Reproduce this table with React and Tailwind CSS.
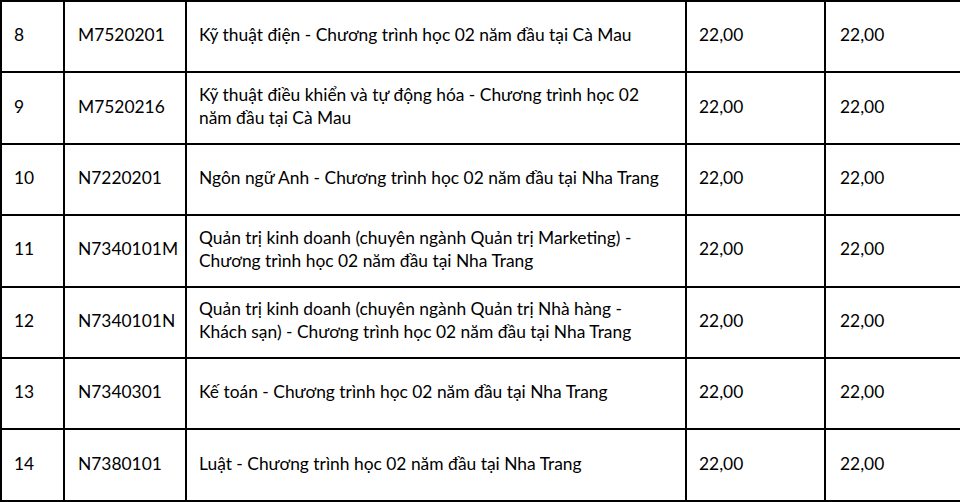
const rows = [
  { stt: "8", code: "M7520201", name: ["Kỹ thuật điện - Chương trình học 02 năm đầu tại Cà Mau"] },
  { stt: "9", code: "M7520216", name: ["Kỹ thuật điều khiển và tự động hóa - Chương trình học 02", "năm đầu tại Cà Mau"] },
  { stt: "10", code: "N7220201", name: ["Ngôn ngữ Anh - Chương trình học 02 năm đầu tại Nha Trang"] },
  { stt: "11", code: "N7340101M", name: ["Quản trị kinh doanh (chuyên ngành Quản trị Marketing) -", "Chương trình học 02 năm đầu tại Nha Trang"] },
  { stt: "12", code: "N7340101N", name: ["Quản trị kinh doanh (chuyên ngành Quản trị Nhà hàng -", "Khách sạn) - Chương trình học 02 năm đầu tại Nha Trang"] },
  { stt: "13", code: "N7340301", name: ["Kế toán - Chương trình học 02 năm đầu tại Nha Trang"] },
  { stt: "14", code: "N7380101", name: ["Luật - Chương trình học 02 năm đầu tại Nha Trang"] },
];

export default function App() {
  return (
    <div className="w-[960px] h-[502px] overflow-hidden bg-white">
      <table
        className="w-[990px] table-fixed border-collapse text-[17.4px] leading-[23px] text-black"
        style={{ fontFamily: "Lato, 'Noto Sans', sans-serif" }}
      >
        <colgroup>
          <col className="w-[63px]" />
          <col className="w-[122px]" />
          <col className="w-[500px]" />
          <col className="w-[139px]" />
          <col />
        </colgroup>
        <tbody>
          {rows.map((r) => (
            <tr key={r.stt} className="h-[71.4px]">
              <td className="border-2 border-black pl-[12px] pb-[4px] align-middle">{r.stt}</td>
              <td className="border-2 border-black pl-[13px] pb-[4px] align-middle">{r.code}</td>
              <td className="border-2 border-black pl-[12px] pb-[4px] align-middle">
                {r.name.map((l, i) => (
                  <div key={i} className="whitespace-nowrap">{l}</div>
                ))}
              </td>
              <td className="border-2 border-black pl-[12px] pb-[4px] align-middle">22,00</td>
              <td className="border-2 border-black pl-[14px] pb-[4px] align-middle">22,00</td>
            </tr>
          ))}
        </tbody>
      </table>
    </div>
  );
}
